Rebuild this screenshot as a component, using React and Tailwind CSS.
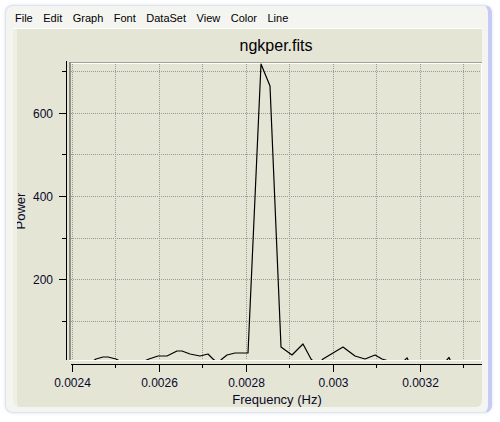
import React from "react"

const menu = ["File", "Edit", "Graph", "Font", "DataSet", "View", "Color", "Line"]

// plot scale: 0.0002 Hz = 87px, 200 power = 83.3px
const fx = (f) => 71.5 + ((f - 0.0024) / 0.0002) * 87
const py = (p) => 364 - p * 0.4165

const curve = [
  [71, 368], [90, 364], [96, 360], [103, 358], [108, 358], [116, 360], [125, 365],
  [140, 364], [149, 360], [158, 357], [167, 357], [177, 352], [182, 352], [190, 355],
  [200, 357], [208, 355], [213, 360], [218, 364], [222, 360], [227, 356], [235, 354],
  [248, 354], [261, 65], [270, 87], [281, 348], [292, 356], [303, 345], [311, 360],
  [317, 366], [323, 360], [343, 348], [355, 357], [365, 360], [375, 356], [382, 360],
  [395, 364], [404, 362], [407, 358.8], [409, 363], [430, 366], [446, 362], [449, 358.5],
  [451, 363], [470, 365], [481, 364],
]

const xMajor = [0.0024, 0.0026, 0.0028, 0.003, 0.0032]
const xMinor = [0.0025, 0.0027, 0.0029, 0.0031, 0.0033]
const yMajor = [200, 400, 600]
const yMinor = [100, 300, 500, 700]

function Chart() {
  const gridX = [...xMajor, ...xMinor].map((f) => Math.round(fx(f)) + 0.5)
  const gridY = [100, 200, 300, 400, 500, 600, 700].map((p) => Math.floor(py(p)) + 0.5)
  const font = "'Liberation Sans', Arial, sans-serif"

  return (
    <svg width="465" height="345" viewBox="17 63 465 345" className="block overflow-visible">
      <defs>
        <clipPath id="plot">
          <rect x="71" y="64" width="410" height="297" />
        </clipPath>
      </defs>

      <g shapeRendering="crispEdges">
        {/* grid */}
        {gridY.map((y) => (
          <line key={"gy" + y} x1="71" x2="481" y1={y} y2={y} stroke="#9a9a94" strokeDasharray="1 1" />
        ))}
        {gridX.map((x) => (
          <line key={"gx" + x} x1={x} x2={x} y1="65" y2="361" stroke="#9a9a94" strokeDasharray="1 1" />
        ))}

        {/* plot frame */}
        <line x1="69" x2="482" y1="63.5" y2="63.5" stroke="#a2a294" />
        <line x1="71" x2="481" y1="64.5" y2="64.5" stroke="#ffffff" />
        <rect x="69" y="63" width="2" height="299" fill="#8f8f84" />
        <line x1="481.5" x2="481.5" y1="64" y2="362" stroke="#ffffff" />
        <line x1="69" x2="482" y1="361.5" y2="361.5" stroke="#ffffff" />

        {/* y axis */}
        <line x1="66.5" x2="66.5" y1="62" y2="361" stroke="#000" />
        {yMajor.map((p) => {
          const y = Math.floor(py(p)) + 0.5
          return <line key={"ym" + p} x1="59" x2="66" y1={y} y2={y} stroke="#000" />
        })}
        {yMinor.map((p) => {
          const y = Math.floor(py(p)) + 0.5
          return <line key={"yn" + p} x1="62" x2="66" y1={y} y2={y} stroke="#000" />
        })}

        {/* x axis */}
        <line x1="71" x2="482" y1="365.5" y2="365.5" stroke="#000" />
        {xMajor.map((f) => {
          const x = Math.round(fx(f)) + 0.5
          return <line key={"xm" + f} x1={x} x2={x} y1="365" y2="373" stroke="#000" />
        })}
        {xMinor.map((f) => {
          const x = Math.round(fx(f)) + 0.5
          return <line key={"xn" + f} x1={x} x2={x} y1="365" y2="369" stroke="#000" />
        })}
      </g>

      {/* data */}
      <g clipPath="url(#plot)">
        <polyline
          points={curve.map((p) => p.join(",")).join(" ")}
          fill="none"
          stroke="#000"
          strokeWidth="1.2"
          strokeLinejoin="round"
        />
      </g>

      {/* labels */}
      <g fontFamily={font} fill="#08082a">
        {yMajor.map((p) => (
          <text key={"yl" + p} x="53" y={Math.floor(py(p)) + 5} textAnchor="end" fontSize="12">
            {p}
          </text>
        ))}
        <text transform="translate(25,212) rotate(-90)" textAnchor="middle" fontSize="13">
          Power
        </text>
        {xMajor.map((f) => (
          <text key={"xl" + f} x={Math.round(fx(f)) + 0.5} y="388" textAnchor="middle" fontSize="12">
            {f === 0.003 ? "0.003" : f.toString()}
          </text>
        ))}
        <text x="277" y="405" textAnchor="middle" fontSize="13">
          Frequency (Hz)
        </text>
      </g>
    </svg>
  )
}

export default function App() {
  return (
    <div className="w-[500px] h-[422px] bg-white pt-[5px] pl-[5px] font-['Liberation_Sans',Arial,sans-serif]">
      <div className="w-[487px] h-[408px] rounded-[8px] border border-[#dde4ee] border-r-[4px] border-r-[#c6caf5] bg-[#f4f4f1] shadow-[0_0_3px_rgba(180,195,215,0.5)] flex flex-col pl-[7px] pr-[6px] pb-[5px]">
        {/* menu bar */}
        <div className="h-[22px] flex items-center gap-[10.5px] pl-[2px] pt-[2px] text-[11px] text-black">
          {menu.map((m) => (
            <span key={m}>{m}</span>
          ))}
        </div>
        <div className="h-px bg-white" />

        {/* graph panel */}
        <div className="flex-1 flex flex-col bg-[#e5e5d6] rounded-b-[6px] border-l-[4px] border-l-[#efefe6] overflow-hidden">
          <div className="h-[34px] flex items-center justify-center pl-[53px] text-[16px] text-black">
            ngkper.fits
          </div>
          <Chart />
        </div>
      </div>
    </div>
  )
}
